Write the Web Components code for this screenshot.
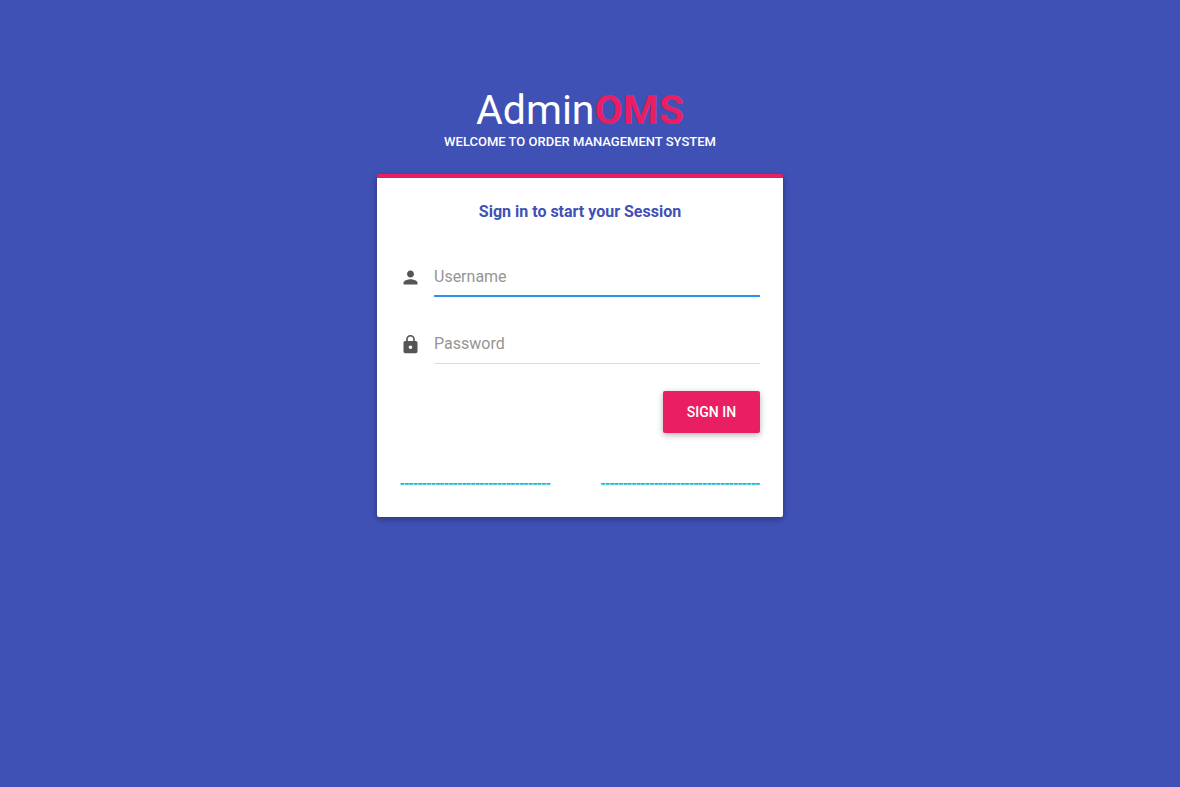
<!DOCTYPE html>
<html lang="en">
<head>
<meta charset="utf-8">
<meta name="viewport" content="width=device-width, initial-scale=1">
<title>Sign In | AdminOMS</title>
<style>
  body { margin: 0; padding-right: 20px; background: #3f51b5; font-family: Roboto, "Liberation Sans", sans-serif; }
</style>
</head>
<body>
<oms-login-page>
  <oms-logo slot="logo"></oms-logo>
  <oms-card>
    <oms-login-form></oms-login-form>
  </oms-card>
</oms-login-page>

<template id="page-template">
  <style>
    :host { display: block; max-width: 406px; margin: 0 auto; padding: 87px 16px 32px; }
    main { display: flex; flex-direction: column; gap: 23px; }
  </style>
  <main><slot name="logo"></slot><slot></slot></main>
</template>

<template id="logo-template">
  <style>
    :host { display: block; text-align: center; color: #fff; }
    a { display: block; color: inherit; text-decoration: none; font-size: 41px; line-height: 46px; }
    b { color: #e91e63; }
    small { display: block; font-size: 13px; line-height: 18px; font-weight: 500; }
  </style>
  <a href="#">Admin<b>OMS</b></a>
  <small>WELCOME TO ORDER MANAGEMENT SYSTEM</small>
</template>

<template id="card-template">
  <style>
    :host { display: block; background: #fff; border-top: 4px solid #e91e63; border-radius: 2px; padding: 22px 23px 22px;
      box-shadow: 0 2px 6px rgba(0, 0, 0, .35); }
  </style>
  <slot></slot>
</template>

<template id="field-template">
  <style>
    :host { display: flex; align-items: center; gap: 13px; color: #555; }
    label { display: flex; width: 21px; justify-content: center; }
    svg { display: block; width: 21px; height: 21px; fill: currentColor; }
    .line { flex: 1; min-width: 0; border-bottom: 1px solid #ddd; padding-bottom: 1px; }
    :host([active]) .line { border-bottom: 2px solid #2a91ed; padding-bottom: 0; }
    input { display: block; box-sizing: border-box; width: 100%; height: 38px; border: 0; outline: 0; padding: 0;
      background: none; font: 16px/24px Roboto, "Liberation Sans", sans-serif; color: #555; }
    input::placeholder { color: #959595; opacity: 1; }
  </style>
  <label for="control"><svg viewBox="0 0 24 24" aria-hidden="true"><path/></svg></label>
  <div class="line"><input id="control"></div>
</template>

<template id="form-template">
  <style>
    :host { display: block; }
    h1 { margin: 0; text-align: center; font-size: 16px; line-height: 24px; font-weight: 700; color: #3f51b5; }
    .fields { display: flex; flex-direction: column; gap: 27px; margin-top: 33px; }
    .actions { display: flex; justify-content: flex-end; margin-top: 27px; }
    button { min-width: 97px; height: 42px; border: 0; border-radius: 2px; padding: 0 16px; background: #e91e63; color: #fff;
      font: 500 14px/24px Roboto, "Liberation Sans", sans-serif; box-shadow: 0 2px 6px rgba(0, 0, 0, .3); }
    nav { display: flex; justify-content: space-between; margin-top: 40px; font-size: 16px; line-height: 22px; }
    a { color: #00bcd4; text-decoration: none; white-space: nowrap; text-shadow: 0 1px 0 #5fd6ea; }
  </style>
  <form>
    <h1>Sign in to start your Session</h1>
    <div class="fields">
      <oms-field name="username" label="Username" icon="person" active></oms-field>
      <oms-field name="password" label="Password" icon="lock" type="password"></oms-field>
    </div>
    <div class="actions"><button type="button">SIGN IN</button></div>
    <nav>
      <a href="#">----------------------------------</a>
      <a href="#">------------------------------------</a>
    </nav>
  </form>
</template>

<script>
  const ICONS = {
    person: 'M12 12c2.21 0 4-1.79 4-4s-1.79-4-4-4-4 1.79-4 4 1.79 4 4 4zm0 2c-2.67 0-8 1.34-8 4v2h16v-2c0-2.66-5.33-4-8-4z',
    lock: 'M18 8h-1V6c0-2.76-2.24-5-5-5S7 3.24 7 6v2H6c-1.1 0-2 .9-2 2v10c0 1.1.9 2 2 2h12c1.1 0 2-.9 2-2V10c0-1.1-.9-2-2-2zm-6 9c-1.1 0-2-.9-2-2s.9-2 2-2 2 .9 2 2-.9 2-2 2zm3.1-9H8.9V6c0-1.71 1.39-3.1 3.1-3.1 1.71 0 3.1 1.39 3.1 3.1v2z'
  };

  class TemplateElement extends HTMLElement {
    constructor() {
      super();
      const template = document.getElementById(this.constructor.template);
      this.attachShadow({ mode: 'open' }).append(template.content.cloneNode(true));
    }
  }

  class OmsField extends TemplateElement {
    static template = 'field-template';
    connectedCallback() {
      const input = this.shadowRoot.querySelector('input');
      const label = this.getAttribute('label');
      input.type = this.getAttribute('type') || 'text';
      input.name = this.getAttribute('name');
      input.placeholder = label;
      input.setAttribute('aria-label', label);
      this.shadowRoot.querySelector('path').setAttribute('d', ICONS[this.getAttribute('icon')]);
    }
  }

  customElements.define('oms-field', OmsField);
  customElements.define('oms-login-form', class extends TemplateElement { static template = 'form-template'; });
  customElements.define('oms-card', class extends TemplateElement { static template = 'card-template'; });
  customElements.define('oms-logo', class extends TemplateElement { static template = 'logo-template'; });
  customElements.define('oms-login-page', class extends TemplateElement { static template = 'page-template'; });
</script>
</body>
</html>
